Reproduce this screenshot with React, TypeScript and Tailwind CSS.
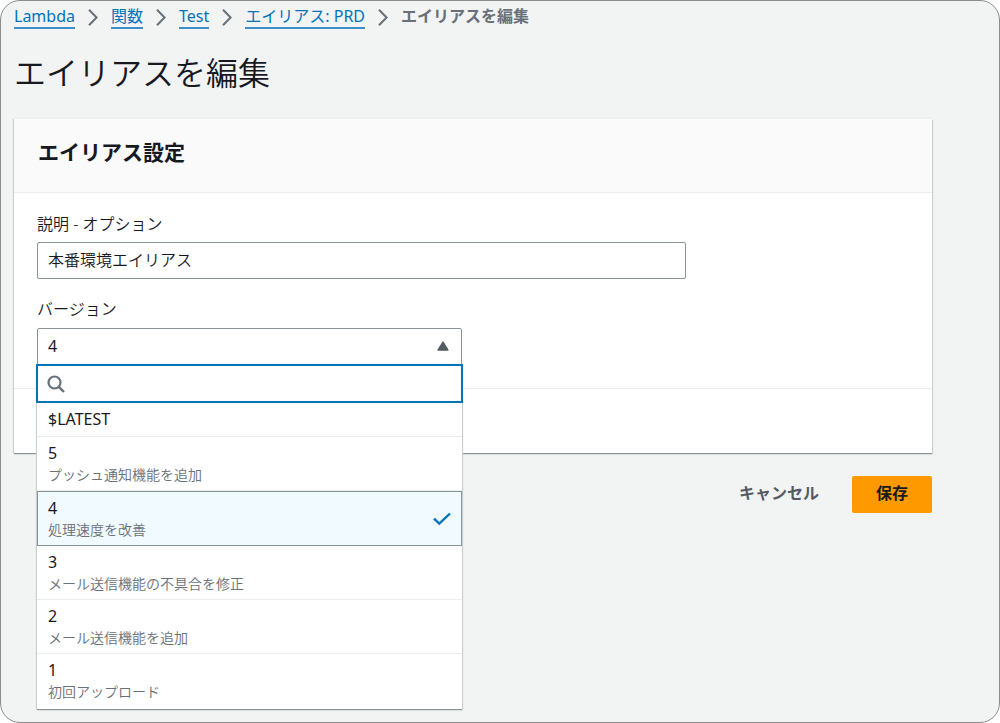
import { useState } from 'react'

const crumbs = ['Lambda', '関数', 'Test', 'エイリアス: PRD']

const versions = [
  { value: '$LATEST', description: '' },
  { value: '5', description: 'プッシュ通知機能を追加' },
  { value: '4', description: '処理速度を改善' },
  { value: '3', description: 'メール送信機能の不具合を修正' },
  { value: '2', description: 'メール送信機能を追加' },
  { value: '1', description: '初回アップロード' },
]

function Chevron() {
  return (
    <svg className="h-[17px] w-2.5 text-[#687078]" viewBox="0 0 10 17" fill="none" aria-hidden="true">
      <path d="M1 0.8 8.6 8.5 1 16.2" stroke="currentColor" strokeWidth="2" />
    </svg>
  )
}

function Breadcrumbs() {
  return (
    <nav aria-label="breadcrumb">
      <ol className="flex items-start gap-[13px] text-base leading-[22px]">
        {crumbs.map((crumb) => (
          <li key={crumb} className="flex items-center gap-[13px]">
            <a href="#" className="border-b-2 border-[#3d8fcb] text-[#0073bb]">
              {crumb}
            </a>
            <Chevron />
          </li>
        ))}
        <li className="font-bold text-[#687078]" aria-current="page">
          エイリアスを編集
        </li>
      </ol>
    </nav>
  )
}

function VersionSelect() {
  const [open, setOpen] = useState(true)
  const [selected, setSelected] = useState('4')
  const [filter, setFilter] = useState('')

  const shown = versions.filter((v) => (v.value + v.description).includes(filter))

  return (
    <div className="relative w-full max-w-[425px]">
      <button
        id="version"
        type="button"
        aria-haspopup="listbox"
        aria-expanded={open}
        onClick={() => setOpen(!open)}
        className="flex h-[38px] w-full items-center justify-between rounded-t-xs border border-[#879596] bg-white px-2.5 pb-0.5 text-left"
      >
        {selected}
        <svg className="mr-0.5 h-2.5 w-3 text-[#545b64]" viewBox="0 0 12 10" aria-hidden="true">
          <path
            d="M6 1 11 9H1Z"
            fill="currentColor"
            stroke="currentColor"
            strokeWidth="1.4"
            strokeLinejoin="round"
            className={open ? '' : 'origin-center rotate-180'}
          />
        </svg>
      </button>
      {open && (
        <div className="absolute inset-x-0 top-9 z-10 bg-white shadow-[0_1px_1px_0_#879596,1px_1px_1px_0_#d5dbdb,-1px_0_1px_0_#d5dbdb]">
          <div className="-mx-px flex h-[39px] items-center border-2 border-[#0073bb] bg-white px-[9px]">
            <svg className="size-[18px] text-[#687078]" viewBox="0 0 18 18" fill="none" aria-hidden="true">
              <circle cx="7.5" cy="7.5" r="6" stroke="currentColor" strokeWidth="2.2" />
              <path d="m11.8 11.8 5.2 5.2" stroke="currentColor" strokeWidth="2.4" />
            </svg>
            <input
              type="text"
              aria-label="バージョンを検索"
              value={filter}
              onChange={(e) => setFilter(e.target.value)}
              className="ml-2 min-w-0 flex-1 outline-none"
            />
          </div>
          <ul role="listbox" aria-label="バージョン" className="pb-0.5">
            {shown.map((v) => (
              <li
                key={v.value}
                role="option"
                aria-selected={v.value === selected}
                onClick={() => setSelected(v.value)}
                className={
                  v.value === selected
                    ? 'flex items-center justify-between border border-[#879596] bg-[#f1faff] px-2.5 py-[5px]'
                    : 'flex items-center justify-between border-b border-[#eaeded] px-[11px] py-[5px] last:border-b-0'
                }
              >
                <div>
                  <div className="leading-[23px]">{v.value}</div>
                  {v.description && (
                    <div className="text-sm leading-5 font-[350] text-[#687078]">{v.description}</div>
                  )}
                </div>
                {v.value === selected && (
                  <svg className="h-3.5 w-[18px] text-[#0073bb]" viewBox="0 0 18 14" fill="none" aria-hidden="true">
                    <path d="M1 6.7 6.3 11.7 17 1.5" stroke="currentColor" strokeWidth="2.4" />
                  </svg>
                )}
              </li>
            ))}
          </ul>
        </div>
      )}
    </div>
  )
}

export default function App() {
  const [description, setDescription] = useState('本番環境エイリアス')

  return (
    <div className="min-h-screen bg-white font-['Noto_Sans','Noto_Sans_CJK_JP',sans-serif] text-base text-[#16191f]">
      <main
        lang="ja"
        className="min-h-screen rounded-[20px] border border-[#8c8c8c] bg-[#f2f3f3] pt-1 pr-[67px] pb-3 pl-[13px]"
      >
        <Breadcrumbs />
        <h1 className="mt-6 text-[32px] leading-10 font-[350]">エイリアスを編集</h1>
        <form onSubmit={(e) => e.preventDefault()}>
          <section className="mt-[26px] bg-white shadow-[0_1px_1px_0_#879596,1px_1px_1px_0_#d5dbdb,-1px_0_1px_0_#d5dbdb]">
            <header className="border-b border-[#eaeded] bg-[#fafafa] px-6 pt-[17px] pb-6">
              <h2 className="text-[21px] leading-8 font-bold">エイリアス設定</h2>
            </header>
            <div className="px-[23px] pt-[19px] pb-[22px]">
              <label htmlFor="description" className="block leading-6 font-[350]">
                説明 - オプション
              </label>
              <input
                id="description"
                type="text"
                value={description}
                onChange={(e) => setDescription(e.target.value)}
                className="mt-1.5 block h-[37px] w-full max-w-[649px] rounded-xs border border-[#879596] bg-white px-2.5 pb-1 font-[350]"
              />
              <label htmlFor="version" className="mt-[18px] mb-[7px] block leading-6 font-[350]">
                バージョン
              </label>
              <VersionSelect />
            </div>
            <footer className="h-[65px] border-t border-[#eaeded]" />
          </section>
          <div className="mt-[23px] flex items-center justify-end gap-3">
            <button type="button" className="h-[37px] px-[21px] pb-1 font-bold text-[#545b64]">
              キャンセル
            </button>
            <button
              type="submit"
              className="h-[37px] rounded-xs bg-[#ff9900] px-6 pb-1 font-bold text-[#16191f]"
            >
              保存
            </button>
          </div>
        </form>
      </main>
    </div>
  )
}
